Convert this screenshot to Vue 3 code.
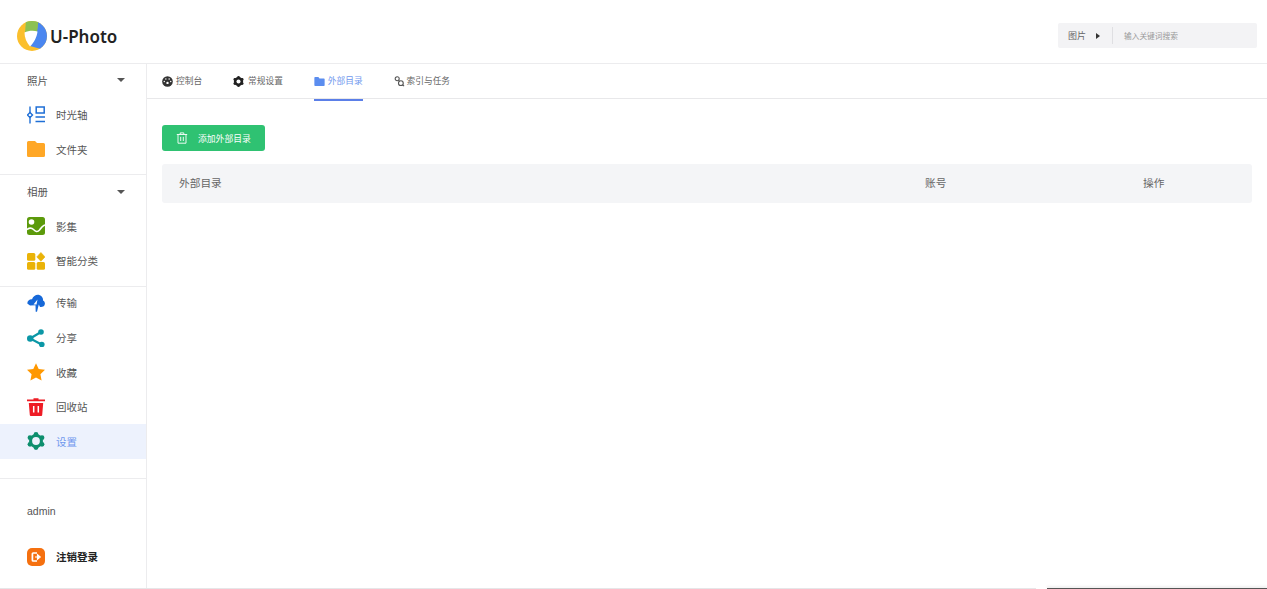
<template>
  <div class="layout">
    <header class="topbar">
      <div class="brand">
        <svg class="logo" viewBox="0 0 32 32" width="32" height="32">
          <defs>
            <clipPath id="logo-clip">
              <circle cx="16" cy="16" r="15" />
            </clipPath>
          </defs>
          <g clip-path="url(#logo-clip)">
            <rect width="32" height="32" fill="#fbbf2d" />
            <path d="M22 0H32V28L25 29 14 26 21 11Z" fill="#4a86f0" />
            <path d="M10 0H22.500L21 12 9 13Z" fill="#8cc152" />
            <path d="M8.500 12.500C12 10.500 18 10.200 21.500 11.500 21 17 18 22.500 14 26.500 10.500 22.500 8.500 17.500 8.500 12.500Z" fill="#fff" />
          </g>
        </svg>
        <span class="brand-name">U-Photo</span>
      </div>
      <div class="search">
        <div class="search-type">
          <span>图片</span>
          <i class="arrow-right"></i>
        </div>
        <span class="search-hint">输入关键词搜索</span>
      </div>
    </header>

    <div class="body">
      <aside class="sidebar">
        <div class="group-title">
          <span>照片</span>
          <i class="arrow-down"></i>
        </div>
        <a class="nav-item">
          <svg viewBox="0 0 18 18" class="nav-icon">
            <path d="M3 .5v17" stroke="#1f6fd6" stroke-width="1.400" />
            <path d="M3 6.500 5.500 9 3 11.500 .5 9Z" fill="#fff" stroke="#1f6fd6" stroke-width="1.400" />
            <rect x="9.200" y="1" width="8" height="6" fill="none" stroke="#1f6fd6" stroke-width="1.500" />
            <path d="M8.500 11h9.500M8.500 15.500h9.500" stroke="#1f6fd6" stroke-width="1.500" />
          </svg>
          <span>时光轴</span>
        </a>
        <a class="nav-item">
          <svg viewBox="0 0 18 18" class="nav-icon">
            <path d="M0 2.500A1.500 1.500 0 0 1 1.500 1H8L10 3H16.500A1.500 1.500 0 0 1 18 4.500V15.500A1.500 1.500 0 0 1 16.500 17H1.500A1.500 1.500 0 0 1 0 15.500Z" fill="#ffa726" />
          </svg>
          <span>文件夹</span>
        </a>

        <div class="divider first"></div>

        <div class="group-title">
          <span>相册</span>
          <i class="arrow-down"></i>
        </div>
        <a class="nav-item">
          <svg viewBox="0 0 18 18" class="nav-icon">
            <rect width="18" height="18" rx="2.500" fill="#5c9a0b" />
            <circle cx="4.500" cy="5" r="2.800" fill="#fff" />
            <path d="M0 12.500C2 11 4.500 10.500 6.500 12.500 8.500 14.500 10.500 15.500 12.500 13 14 11 15.500 8.500 18 8" fill="none" stroke="#fff" stroke-width="1.600" />
          </svg>
          <span>影集</span>
        </a>
        <a class="nav-item">
          <svg viewBox="0 0 18 18" class="nav-icon">
            <rect x="0" y="1" width="8.300" height="7.800" rx="1.500" fill="#eab308" />
            <rect x="0" y="10" width="8.300" height="7.800" rx="1.500" fill="#eab308" />
            <rect x="9.700" y="10" width="8.300" height="7.800" rx="1.500" fill="#eab308" />
            <path d="M13.900 .5 18 4.900 13.900 9.300 9.800 4.900Z" fill="#eab308" stroke="#eab308" stroke-width=".6" stroke-linejoin="round" />
          </svg>
          <span>智能分类</span>
        </a>

        <div class="divider second"></div>

        <a class="nav-item">
          <svg viewBox="0 0 18 18" class="nav-icon">
            <path d="M.3 9.500C.3 6.800 2.500 5 5 5.200 6.300 1.800 9.500 .2 12.300 1 15 1.800 16.300 4.300 16 6.500 18 7.500 18.500 10 17.200 11.800 16 13 14.500 13 13 13L11.800 10.500 10 17.800 8.700 17.800 8.500 11.200 3 11.500Z" fill="#1668d8" />
            <path d="M10.500 5.500 6.500 10.500H9.500Z" fill="#fff" />
          </svg>
          <span>传输</span>
        </a>
        <a class="nav-item">
          <svg viewBox="0 0 18 18" class="nav-icon">
            <path d="M14 3 3.200 9.500 14.500 15.500" fill="none" stroke="#0b97a6" stroke-width="2.200" />
            <circle cx="14" cy="3" r="2.800" fill="#0b97a6" />
            <circle cx="3.200" cy="9.500" r="3.200" fill="#0b97a6" />
            <circle cx="14.800" cy="15.500" r="2.800" fill="#0b97a6" />
          </svg>
          <span>分享</span>
        </a>
        <a class="nav-item">
          <svg viewBox="0 0 18 18" class="nav-icon">
            <path d="M9 .3 11.700 6 18 6.800 13.400 11.200 14.600 17.500 9 14.400 3.400 17.500 4.600 11.200 0 6.800 6.300 6Z" fill="#ff9800" />
          </svg>
          <span>收藏</span>
        </a>
        <a class="nav-item">
          <svg viewBox="0 0 18 18" class="nav-icon">
            <path d="M6.500 1.500V.3H11.500V1.500H18V3.300H0V1.500Z" fill="#ee1c25" />
            <path d="M1.800 5H16.200L15.200 17A1 1 0 0 1 14.200 18H3.800A1 1 0 0 1 2.800 17Z" fill="#ee1c25" />
            <path d="M6.700 8v6.500M11.300 8v6.500" stroke="#fff" stroke-width="1.500" />
          </svg>
          <span>回收站</span>
        </a>
        <a class="nav-item active">
          <svg viewBox="0 0 18 18" class="nav-icon">
            <g fill="#0e8f6e">
              <circle cx="9" cy="2.400" r="2.400" />
              <circle cx="15" cy="5.700" r="2.400" />
              <circle cx="15" cy="12.300" r="2.400" />
              <circle cx="9" cy="15.600" r="2.400" />
              <circle cx="3" cy="12.300" r="2.400" />
              <circle cx="3" cy="5.700" r="2.400" />
              <circle cx="9" cy="9" r="7" />
            </g>
            <circle cx="9" cy="9" r="3.900" fill="#edf2fd" />
          </svg>
          <span>设置</span>
        </a>

        <div class="divider third"></div>

        <div class="username">admin</div>
        <a class="nav-item logout">
          <svg viewBox="0 0 18 18" class="nav-icon">
            <rect width="18" height="18" rx="5" fill="#f5700f" />
            <path d="M10 5H6.200A.8 .8 0 0 0 5.400 5.800V12.200A.8 .8 0 0 0 6.200 13H10" fill="none" stroke="#fff" stroke-width="1.700" />
            <path d="M8 9H11M10.500 6.700 13.200 9 10.500 11.300Z" stroke="#fff" stroke-width="1.200" fill="#fff" />
          </svg>
          <span>注销登录</span>
        </a>
      </aside>

      <main class="content">
        <nav class="tabs">
          <a class="tab">
            <svg viewBox="0 0 12 12" class="tab-icon">
              <circle cx="6" cy="6" r="5.800" fill="#333" />
              <g fill="#fff">
                <circle cx="4.200" cy="3.200" r=".8" />
                <circle cx="7.800" cy="3.200" r=".8" />
                <circle cx="2.500" cy="6" r=".8" />
                <circle cx="9.500" cy="6" r=".8" />
                <circle cx="6" cy="7.500" r="1.300" />
              </g>
            </svg>
            <span>控制台</span>
          </a>
          <a class="tab">
            <svg viewBox="0 0 12 12" class="tab-icon">
              <g fill="#222">
                <circle cx="6" cy="6" r="5" />
                <circle cx="6" cy="1.500" r="1.500" />
                <circle cx="10" cy="3.700" r="1.500" />
                <circle cx="10" cy="8.300" r="1.500" />
                <circle cx="6" cy="10.500" r="1.500" />
                <circle cx="2" cy="8.300" r="1.500" />
                <circle cx="2" cy="3.700" r="1.500" />
              </g>
              <circle cx="6" cy="6" r="2.200" fill="#fff" />
            </svg>
            <span>常规设置</span>
          </a>
          <a class="tab active">
            <svg viewBox="0 0 12 12" class="tab-icon">
              <path d="M.4 2A.8 .8 0 0 1 1.200 1.200H4.800L6 2.600H10.800A.8 .8 0 0 1 11.600 3.400V10A.8 .8 0 0 1 10.800 10.800H1.200A.8 .8 0 0 1 .4 10Z" fill="#5b8def" />
            </svg>
            <span>外部目录</span>
          </a>
          <a class="tab">
            <svg viewBox="0 0 12 12" class="tab-icon">
              <circle cx="3.500" cy="3" r="2.200" fill="none" stroke="#555" stroke-width="1.200" />
              <circle cx="7.500" cy="7.800" r="2.600" fill="none" stroke="#555" stroke-width="1.200" />
              <path d="M5 4.500 6 6M9.500 9.800 11 11" stroke="#555" stroke-width="1.200" />
            </svg>
            <span>索引与任务</span>
          </a>
        </nav>

        <div class="panel">
          <button class="add-btn" type="button">
            <svg viewBox="0 0 12 12" class="btn-icon">
              <path d="M.8 2.500H11.200M4.200 2.300V.9H7.800V2.300M2 2.500V11.200H10V2.500M4.700 4.800V9M7.300 4.800V9" fill="none" stroke="#fff" stroke-width=".9" />
            </svg>
            <span>添加外部目录</span>
          </button>

          <div class="table-head">
            <span class="col-path">外部目录</span>
            <span class="col-account">账号</span>
            <span class="col-action">操作</span>
          </div>
        </div>
      </main>
    </div>

    <div class="edge-line"></div>
    <div class="edge-window"></div>
  </div>
</template>

<script setup>
</script>

<style>
html,
body {
  margin: 0;
  background: #fff;
  overflow: hidden;
}
</style>

<style scoped>
.layout {
  position: relative;
  width: 1267px;
  height: 589px;
  overflow: hidden;
  display: flex;
  flex-direction: column;
  font-family: "Liberation Sans", "Noto Sans CJK SC", sans-serif;
  color: #444;
  background: #fff;
}

.topbar {
  height: 64px;
  flex-shrink: 0;
  box-sizing: border-box;
  display: flex;
  align-items: center;
  justify-content: space-between;
  padding: 9px 10px 0 16px;
  border-bottom: 1px solid #ececee;
}

.brand {
  display: flex;
  align-items: center;
  gap: 2px;
}

.logo {
  width: 32px;
  height: 32px;
}

.brand-name {
  font-family: "Noto Sans", "Liberation Sans", sans-serif;
  font-size: 17px;
  font-weight: 600;
  color: #222;
}

.search {
  width: 199px;
  height: 25px;
  margin-bottom: 1px;
  display: flex;
  align-items: center;
  background: #f3f3f5;
  border-radius: 2px;
}

.search-type {
  width: 55px;
  height: 17px;
  box-sizing: border-box;
  display: flex;
  align-items: center;
  gap: 10px;
  padding-left: 10px;
  font-size: 9px;
  color: #666;
  border-right: 1px solid #dfdfe2;
}

.arrow-right {
  width: 0;
  height: 0;
  border-left: 4px solid #333;
  border-top: 3px solid transparent;
  border-bottom: 3px solid transparent;
}

.search-hint {
  margin-left: 11px;
  font-size: 7.700px;
  color: #999;
}

.body {
  flex: 1;
  display: flex;
  min-height: 0;
}

.sidebar {
  width: 147px;
  flex-shrink: 0;
  box-sizing: border-box;
  border-right: 1px solid #ececee;
  display: flex;
  flex-direction: column;
}

.group-title {
  height: 33.600px;
  flex-shrink: 0;
  box-sizing: border-box;
  display: flex;
  align-items: center;
  justify-content: space-between;
  padding: 0 21px 1px 27px;
  font-size: 10.500px;
  color: #555;
}

.arrow-down {
  width: 0;
  height: 0;
  border-top: 4px solid #555;
  border-left: 4px solid transparent;
  border-right: 4px solid transparent;
}

.nav-item {
  height: 34.600px;
  flex-shrink: 0;
  display: flex;
  align-items: center;
  gap: 11px;
  padding-left: 27px;
  font-size: 10.500px;
  color: #555;
}

.nav-item.active {
  background: #edf2fd;
  color: #6f97ee;
}

.nav-icon {
  width: 18px;
  height: 18px;
  flex-shrink: 0;
}

.divider {
  height: 1px;
  flex-shrink: 0;
  background: #ececee;
}

.divider.first {
  margin-top: 7.600px;
}

.divider.second {
  margin-top: 7.800px;
  margin-bottom: -1.300px;
}

.divider.third {
  margin-top: 19.300px;
}

.username {
  margin-top: 25px;
  padding-left: 27px;
  font-size: 10.500px;
  line-height: 14px;
  color: #555;
}

.logout {
  margin-top: 21.400px;
  font-weight: 700;
  color: #222;
}

.content {
  flex: 1;
  min-width: 0;
  display: flex;
  flex-direction: column;
}

.tabs {
  height: 35px;
  flex-shrink: 0;
  box-sizing: border-box;
  display: flex;
  padding-left: 15px;
  gap: 31px;
  border-bottom: 1px solid #e8e8ea;
}

.tab {
  height: 37px;
  box-sizing: border-box;
  display: flex;
  align-items: flex-start;
  gap: 3px;
  padding-top: 12px;
  font-size: 8.700px;
  line-height: 11px;
  color: #666;
}

.tab:nth-child(2) {
  gap: 4px;
}

.tab:nth-child(4) {
  gap: 2px;
}

.tab.active {
  color: #6f97ee;
  border-bottom: 2px solid #5b7fe8;
}

.tab-icon {
  width: 11px;
  height: 11px;
  flex-shrink: 0;
}

.panel {
  padding: 26px 15px 0 15px;
}

.add-btn {
  width: 103px;
  height: 26px;
  display: flex;
  align-items: center;
  gap: 10px;
  padding: 0 0 0 14px;
  border: none;
  border-radius: 3px;
  background: #2fc272;
  color: #fff;
  font-family: inherit;
  font-size: 8.800px;
}

.btn-icon {
  width: 12px;
  height: 12px;
  flex-shrink: 0;
}

.table-head {
  margin-top: 13px;
  height: 39px;
  box-sizing: border-box;
  padding-bottom: 2px;
  display: flex;
  align-items: center;
  border-radius: 3px;
  background: #f4f5f7;
  font-size: 10.700px;
  color: #666;
}

.col-path {
  width: 746px;
  padding-left: 17px;
}

.col-account {
  width: 218px;
}

.edge-line {
  position: absolute;
  left: 0;
  bottom: 0;
  width: 1036px;
  height: 1px;
  background: #e6e6e8;
}

.edge-window {
  position: absolute;
  left: 1047px;
  right: 0;
  bottom: 0;
  height: 1px;
  background: #555;
  box-shadow: 0 -1px 3px rgba(0, 0, 0, .18);
}
</style>
